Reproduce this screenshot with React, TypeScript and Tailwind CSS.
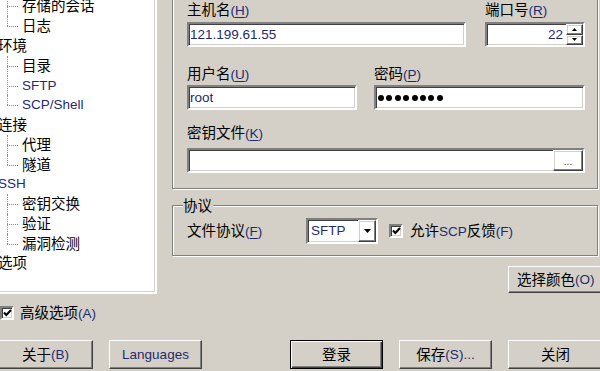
import React from 'react';

const sunken =
  'border-2 border-t-[#808080] border-l-[#808080] border-b-white border-r-white shadow-[inset_1px_1px_0_#404040,inset_-1px_-1px_0_#d4d0c8]';
const raised =
  'border border-t-white border-l-white border-b-[#404040] border-r-[#404040] shadow-[inset_-1px_-1px_0_#808080,inset_1px_1px_0_#d4d0c8]';
const etched = 'border border-[#808080] shadow-[inset_1px_1px_0_#fff,1px_1px_0_#fff]';

// latin runs are smaller and come out navy, like the ClearType Tahoma in the shot
const L = ({ children }: { children: React.ReactNode }) => (
  <span className="text-[13.5px] text-[#1f2a6e]">{children}</span>
);

const Acc = ({ k, u = false }: { k: string; u?: boolean }) => (
  <span className="text-[13.5px] text-[#1f2a6e]">
    (<span className={u ? 'underline underline-offset-2' : ''}>{k}</span>)
  </span>
);

type Node = { t: string; top?: boolean; last?: boolean; latin?: boolean };

const tree: Node[] = [
  { t: '存储的会话' },
  { t: '日志', last: true },
  { t: '环境', top: true },
  { t: '目录' },
  { t: 'SFTP', latin: true },
  { t: 'SCP/Shell', last: true, latin: true },
  { t: '连接', top: true },
  { t: '代理' },
  { t: '隧道', last: true },
  { t: 'SSH', top: true, latin: true },
  { t: '密钥交换' },
  { t: '验证' },
  { t: '漏洞检测', last: true },
  { t: '选项', top: true },
];

const TreeRow = ({ n }: { n: Node }) => (
  <div className={`relative h-[19.77px] flex items-center ${n.top ? 'pl-0' : 'pl-[24px]'}`}>
    {!n.top && (
      <>
        <span
          className={`absolute left-[9px] top-0 border-l border-dotted border-[#8c8c8c] ${
            n.last ? 'h-1/2' : 'h-full'
          }`}
        />
        <span className="absolute left-[9px] top-1/2 w-[11px] border-t border-dotted border-[#8c8c8c]" />
      </>
    )}
    {n.latin ? <L>{n.t}</L> : <span>{n.t}</span>}
  </div>
);

const Check = () => (
  <div className={`w-[14px] h-[14px] bg-white shrink-0 ${sunken} flex items-center justify-center`}>
    <svg width="9" height="8" viewBox="0 0 9 8" className="block">
      <path d="M1 3.5 L3.3 6 L8 1" fill="none" stroke="#000" strokeWidth="2" />
    </svg>
  </div>
);

const Button = ({ children, w = 'w-[93px]', def = false }: { children: React.ReactNode; w?: string; def?: boolean }) => (
  <div
    className={`${w} h-[29px] shrink-0 flex items-center justify-center ${
      def
        ? 'border border-black shadow-[inset_1px_1px_0_#fff,inset_-1px_-1px_0_#404040,inset_-2px_-2px_0_#808080]'
        : raised
    }`}
  >
    {children}
  </div>
);

export default function App() {
  return (
    <div className="w-[600px] h-[371px] overflow-hidden bg-[#d4d0c8] text-black text-[14.5px] leading-[18px] font-['Liberation_Sans','Noto_Sans_CJK_SC',sans-serif] select-none">
      <div className="flex items-start">
        {/* navigation tree, cropped at the top left */}
        <div className={`-ml-[4px] -mt-[6px] w-[161px] h-[300px] shrink-0 bg-white ${sunken} pt-[0.6px]`}>
          {tree.map((n) => (
            <TreeRow key={n.t} n={n} />
          ))}
        </div>

        <div className="ml-[15px] w-[431px] shrink-0 flex flex-col">
          {/* session */}
          <div className={`-mt-[11px] mr-[5px] ${etched} pt-[11px] pl-[14px] pr-[12px] pb-[15px]`}>
            <div className="flex gap-[19px]">
              <div className="w-[279px]">
                <div>
                  主机名<Acc k="H" u />
                </div>
                <div className={`mt-[2px] h-[25px] bg-white ${sunken} flex items-center pl-[1px]`}>
                  <L>121.199.61.55</L>
                </div>
              </div>
              <div className="w-[100px]">
                <div>
                  端口号<Acc k="R" u />
                </div>
                <div className={`mt-[2px] h-[25px] bg-white ${sunken} flex`}>
                  <div className="flex-1 flex items-center justify-end pr-[3px]">
                    <L>22</L>
                  </div>
                  <div className="w-[17px] flex flex-col">
                    <div className={`h-1/2 ${raised} flex items-center justify-center`}>
                      <svg width="5" height="3" viewBox="0 0 5 3">
                        <path d="M2.5 0 L5 3 L0 3 Z" fill="#000" />
                      </svg>
                    </div>
                    <div className={`h-1/2 ${raised} flex items-center justify-center`}>
                      <svg width="5" height="3" viewBox="0 0 5 3">
                        <path d="M0 0 L5 0 L2.5 3 Z" fill="#000" />
                      </svg>
                    </div>
                  </div>
                </div>
              </div>
            </div>

            <div className="mt-[18px] flex gap-[17px]">
              <div className="w-[170px]">
                <div>
                  用户名<Acc k="U" u />
                </div>
                <div className={`mt-[1px] h-[25px] bg-white ${sunken} flex items-center pl-[1px]`}>
                  <L>root</L>
                </div>
              </div>
              <div className="w-[211px]">
                <div>
                  密码<Acc k="P" u />
                </div>
                <div className={`mt-[1px] h-[25px] bg-white ${sunken} flex items-center gap-[2.4px] pl-[2px]`}>
                  {Array.from({ length: 8 }).map((_, i) => (
                    <span key={i} className="w-[6px] h-[6px] rounded-full bg-black" />
                  ))}
                </div>
              </div>
            </div>

            <div className="mt-[14px]">
              密钥文件<Acc k="K" u />
            </div>
            <div className={`mt-[5px] h-[25px] bg-white ${sunken} flex justify-end`}>
              <div className={`w-[30px] h-full ${raised} flex items-end justify-center pb-[3px] text-[10px] leading-[10px] text-[#333]`}>
                ...
              </div>
            </div>
          </div>

          {/* protocol */}
          <div className={`relative mt-[16px] mr-[5px] ${etched} pt-[12px] pb-[11px] pl-[14px]`}>
            <span className="absolute left-[10px] -top-[9px] bg-[#d4d0c8] pr-[1px]">协议</span>
            <div className="flex items-center">
              <div className="w-[119px]">
                文件协议<Acc k="F" u />
              </div>
              <div className={`w-[72px] h-[26px] bg-white ${sunken} flex`}>
                <div className="flex-1 flex items-center pl-[3px]">
                  <L>SFTP</L>
                </div>
                <div className={`w-[18px] h-full ${raised} flex items-center justify-center`}>
                  <svg width="7" height="4" viewBox="0 0 7 4">
                    <path d="M0 0 L7 0 L3.5 4 Z" fill="#000" />
                  </svg>
                </div>
              </div>
              <div className="ml-[11px]">
                <Check />
              </div>
              <div className="ml-[7px]">
                允许<L>SCP</L>反馈<Acc k="F" />
              </div>
            </div>
          </div>

          <div className="mt-[10px] self-end">
            <div className={`w-[95px] h-[27px] ${raised} flex items-center pl-[8px]`}>
              选择颜色<Acc k="O" />
            </div>
          </div>
        </div>
      </div>

      {/* advanced options */}
      <div className="mt-[10px] h-[18px] flex items-center">
        <Check />
        <div className="ml-[6px]">
          高级选项<Acc k="A" />
        </div>
      </div>

      {/* bottom buttons */}
      <div className="mt-[18px] flex">
        <div className="-ml-[2px]">
          <Button w="w-[95px]">
            关于<Acc k="B" />
          </Button>
        </div>
        <div className="ml-[16px]">
          <Button>
            <L>Languages</L>
          </Button>
        </div>
        <div className="ml-[88px]">
          <Button def>登录</Button>
        </div>
        <div className="ml-[16px]">
          <Button>
            保存<Acc k="S" />
            <L>...</L>
          </Button>
        </div>
        <div className="ml-[16px]">
          <Button w="w-[95px]">关闭</Button>
        </div>
      </div>
    </div>
  );
}
